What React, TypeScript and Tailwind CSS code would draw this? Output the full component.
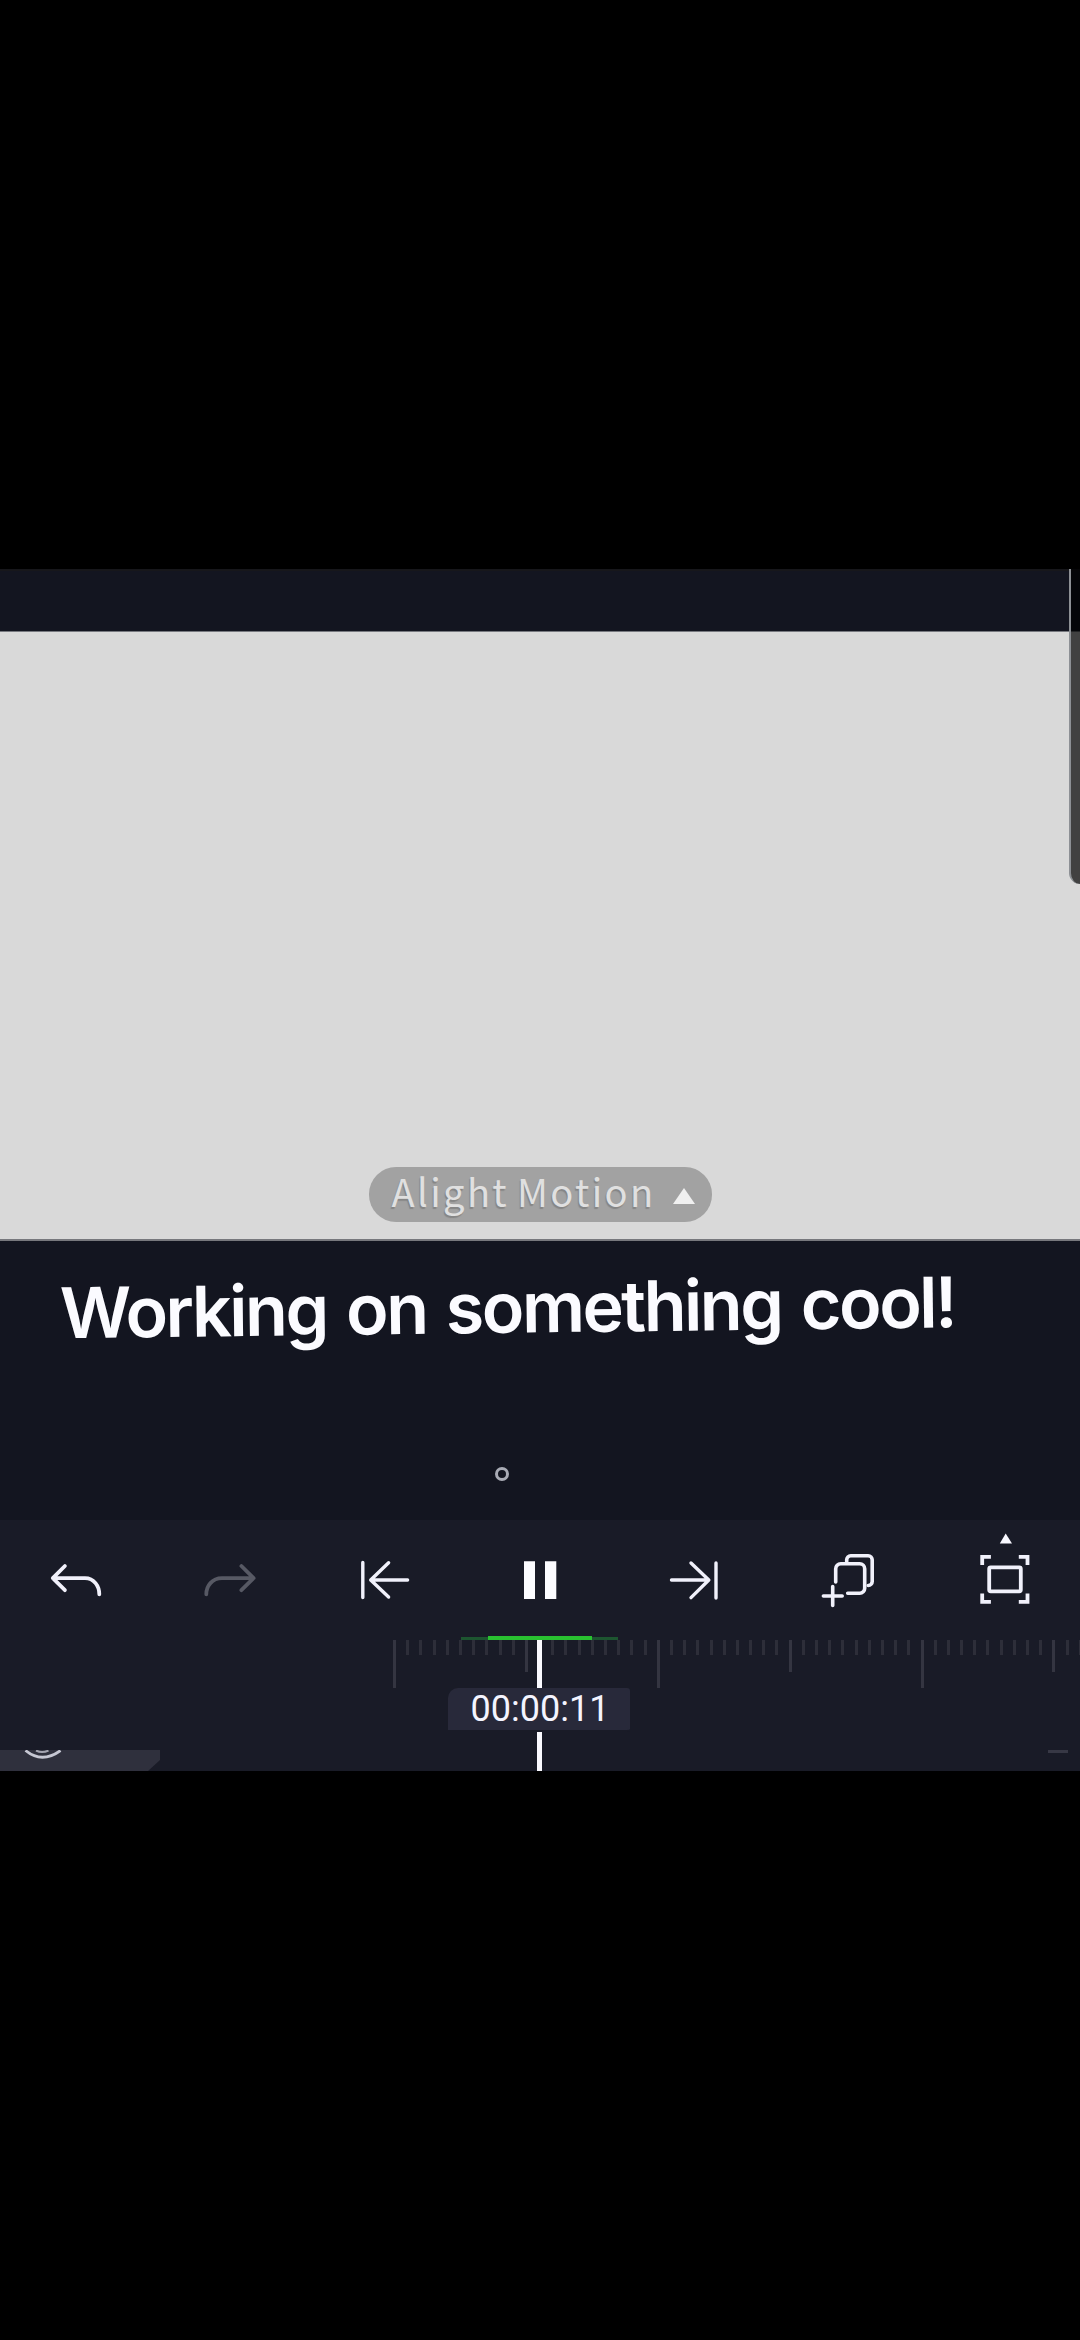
import React from "react"

const ticks = Array.from({ length: 53 }, (_, i) => i)

const tickHeight = (i: number) => {
  if (i % 20 === 0) {
    return "h-12 bg-[#343541]"
  }
  if (i % 10 === 0) {
    return "h-8 bg-[#343541]"
  }
  return "h-[15px] bg-[#2d2e39]"
}

type IconProps = {
  color?: string
  width?: number
  children: React.ReactNode
}

const Icon = ({ color = "#f1f1fb", width = 3.8, children }: IconProps) => (
  <svg
    viewBox="-40 -56 80 112"
    className="h-28 w-20"
    fill="none"
    stroke={color}
    strokeWidth={width}
    strokeLinecap="round"
    strokeLinejoin="round"
  >
    {children}
  </svg>
)

const Toolbar = () => (
  <div className="grid h-[120px] grid-cols-7 items-center justify-items-center">
    <Icon>
      <path d="M-12.1-14-24.2-1.8-12.1 10.2M-24-1.8H8C17-1.8 22.3 6 22.3 14.3" />
    </Icon>
    <Icon color="#575964">
      <path d="M10.4-14 22.6-1.8 10.4 10.2M22.4-1.8H-9C-19-1.8-24.7 6-24.7 14.3" />
    </Icon>
    <Icon width={3.4}>
      <path d="M-23.2-17.5v35M2.6-17.3-15.3 0 2.6 17M-15 0H21.6" />
    </Icon>
    <Icon>
      <path
        d="M-16-18.7h11v37.7h-11zM5-18.7h11.3v37.7H5z"
        fill="#fcfcff"
        stroke="none"
      />
    </Icon>
    <Icon width={3.4}>
      <path d="M22-17v35M-3-17 14.8 0-3 17.6M14.5 0H-22.5" />
    </Icon>
    <Icon width={3.6}>
      <path d="M-13.3 2v-13.3a5 5 0 0 1 5-5h19a5 5 0 0 1 5 5v19.6a5 5 0 0 1-5 5h-12" />
      <path d="M-2.3-18.6v-1.6a4 4 0 0 1 4-4h17.5a4 4 0 0 1 4 4V1.5a4 4 0 0 1-4 4" />
      <path d="M-16.3 6.5v19M-25.6 16h18.8" />
    </Icon>
    <Icon>
      <path
        d="M-20.8-15v-8.2h8.7M15.8-23.2h8.7v8.2M24.5 13.6v8.2h-8.7M-12.1 21.8h-8.7v-8.2"
        strokeLinecap="butt"
        strokeLinejoin="miter"
      />
      <rect x="-13.8" y="-12.7" width="31.6" height="24" rx="1.5" />
      <path d="M2.7-46.5 9-36.6H-3.2z" fill="#f8f8ff" stroke="none" />
    </Icon>
  </div>
)

const Timeline = () => (
  <div className="relative h-[131px] overflow-hidden">
    <div className="flex items-start pl-[393px]">
      {ticks.map((i) => (
        <div key={i} className="w-[13.2px] shrink-0">
          <div className={`w-[3px] ${tickHeight(i)}`} />
        </div>
      ))}
    </div>

    {/* playhead */}
    <div className="absolute left-[537px] top-0 h-[131px] w-[5px] bg-[#fafaff]" />
    <div className="absolute left-[448px] top-12 flex h-[44px] w-[182px] items-center justify-center rounded-tl-[10px] rounded-r-[3px] border-b-2 border-[#191b27] bg-[#28293a] pl-0.5 font-[Roboto,sans-serif] text-[36px] leading-none text-[#f4f4ff]">
      00:00:11
    </div>

    <svg
      viewBox="0 0 160 21"
      className="absolute bottom-0 left-0 h-[21px] w-[160px]"
      fill="none"
    >
      <path d="M0 0H160V10L148 21H0Z" fill="#2f303d" />
      <path d="M25.5.5Q42 14 60.5.5" stroke="#c6c7d3" strokeWidth="2.8" />
      <path d="M36 .5Q42 3.5 48.5.5" stroke="#a4a5b1" strokeWidth="2" />
    </svg>
    <div className="absolute bottom-[18px] left-[1048px] h-[3px] w-5 bg-[#373845]" />
  </div>
)

const App = () => {
  return (
    <div className="flex h-[2340px] w-[1080px] flex-col overflow-hidden bg-black pt-[569px]">
      <main className="relative flex h-[1202px] flex-col bg-[#131520]">
        <div className="h-[62px] border-t-2 border-[#17171b]" />

        <section className="flex h-[610px] flex-col items-center justify-end border-b-2 border-t border-b-[#77787d] border-t-[#77797f] bg-[#d9d9d9] pb-[17px]">
          <div className="flex h-[55px] w-[343px] items-center rounded-[27px] bg-[#a2a2a2] pl-[23px]">
            <span className="-mt-2 whitespace-nowrap font-['Noto_Sans_CJK_SC',sans-serif] text-[38px] leading-[50px] tracking-[2.4px] [word-spacing:-3px] text-[#e0e0e0] [text-shadow:-1px_2px_1px_#858585]">
              Alight Motion
            </span>
            <svg viewBox="0 0 22 16" className="ml-auto mr-[17px] mt-0.5 h-4 w-[22px]">
              <path d="M11 0 22 16H0Z" fill="#f0f0f0" />
            </svg>
          </div>
        </section>

        <section className="flex h-[279px] flex-col">
          <p className="mt-[31px] h-[84px] w-[960px] origin-left -rotate-[0.7deg] whitespace-nowrap pl-[60px] font-[Inter,sans-serif] text-[70px] font-semibold leading-[84px] tracking-[-2.5px] [word-spacing:4.2px] text-[#fbfbff]">
            Working on something cool!
          </p>
          <div className="ml-[495px] mt-[111px] size-[14px] rounded-full border-[3px] border-[#a9abb5]" />
        </section>

        <section className="relative h-[251px] bg-[#191b27]">
          <Toolbar />
          <Timeline />
          {/* cached frames */}
          <div className="absolute left-[461px] top-[117px] flex h-[3px] w-[157px] justify-center bg-[#1d5530]">
            <div className="-mt-px h-1 w-[104px] bg-[#29c130]" />
          </div>
        </section>

        {/* edge panel handle */}
        <div className="absolute left-[1069px] top-0 h-[315px] w-[11px] rounded-bl-[11px] border-l-2 border-[#8d9095] bg-black/70" />
      </main>
    </div>
  )
}

export default App
